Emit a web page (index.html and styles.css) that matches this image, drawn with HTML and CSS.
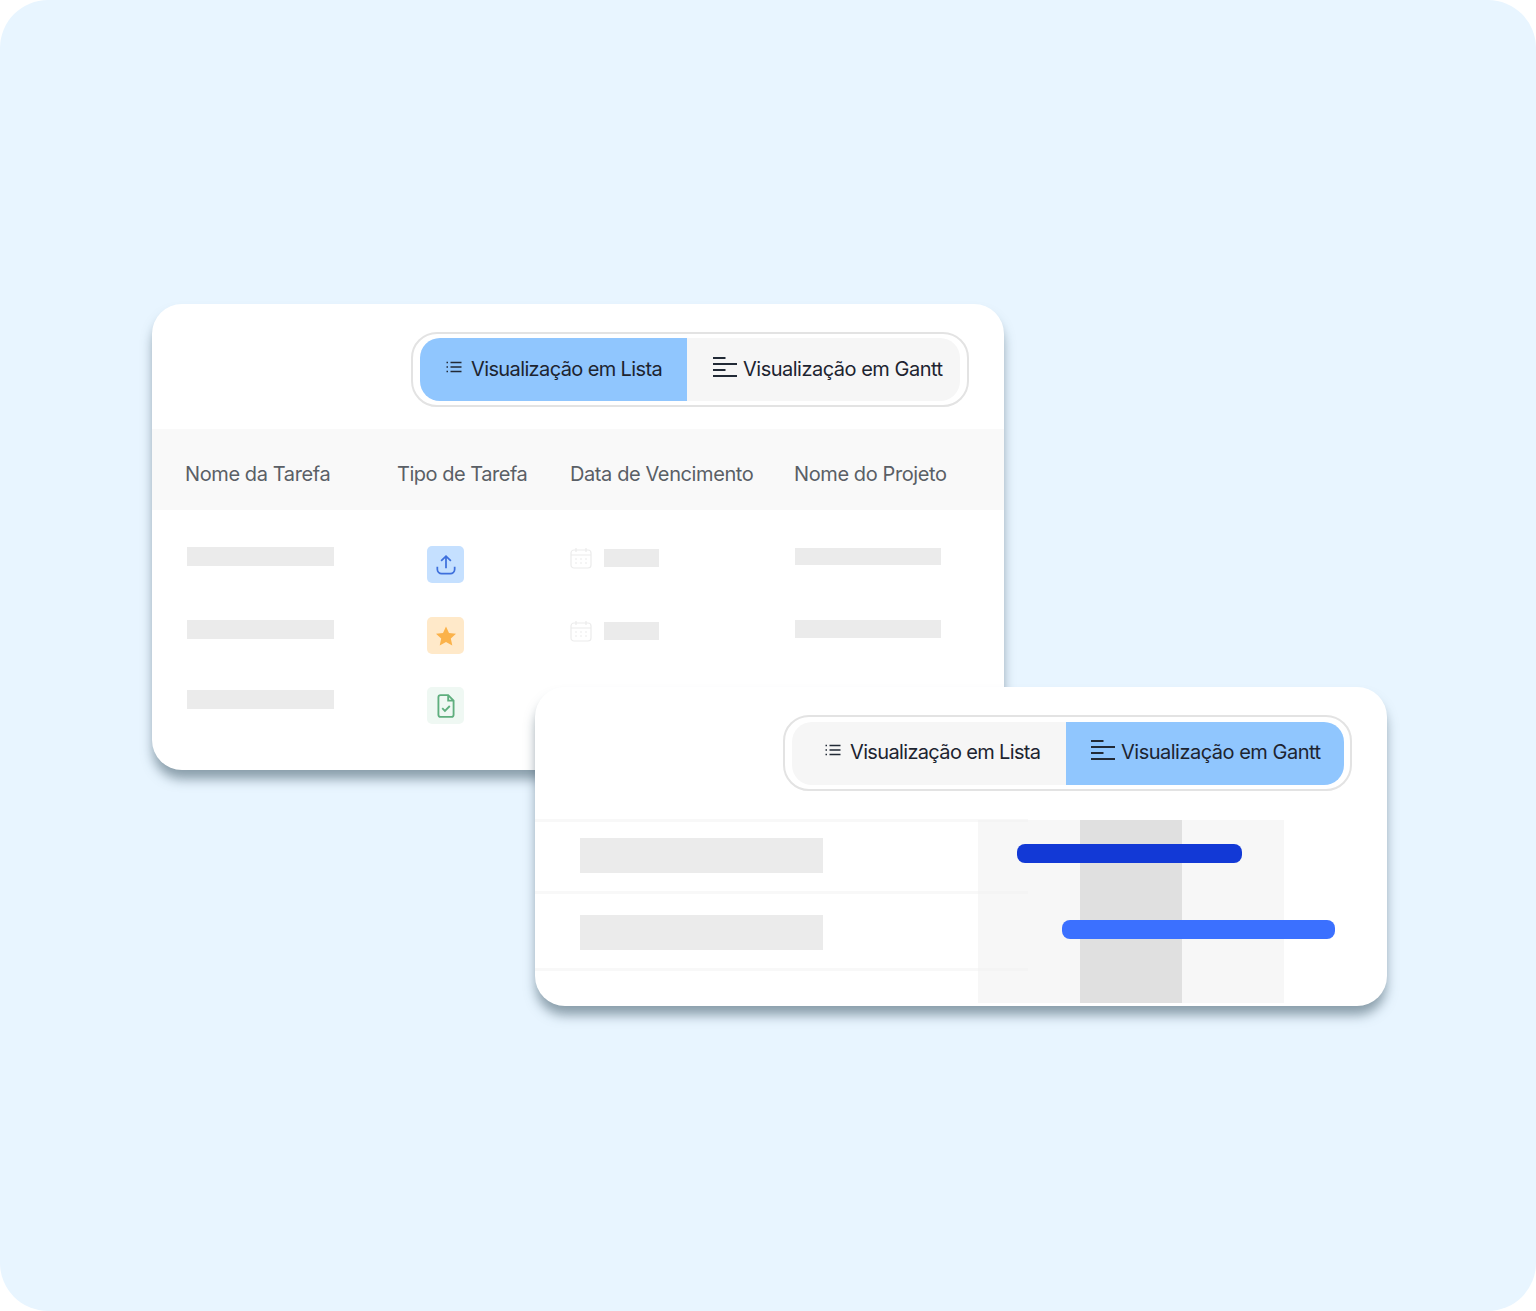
FILE: index.html
```html
<!DOCTYPE html>
<html>
<head>
    <title>Visualização em Lista e Gantt</title>
    <meta charset="UTF-8">
    <link rel="stylesheet" href="styles.css">
</head>
<body>
    <div class="scene">
        <!-- list card -->
        <div class="card card-list">
            <div class="toggle-row">
                <div class="toggle">
                    <div class="tab tab-active tab-a">
                        <svg class="icon-list" viewBox="0 0 16 12"><path d="M4.500 1.500H15.500M4.500 6H15.500M4.500 10.500H15.500M.5 1.500H2M.5 6H2M.5 10.500H2"/></svg>
                        <span>Visualização em Lista</span>
                    </div>
                    <div class="tab tab-b">
                        <svg class="icon-gantt" viewBox="0 0 24 20"><path d="M0 1H12.500M0 7H24M0 13H12.500M0 19H24"/></svg>
                        <span>Visualização em Gantt</span>
                    </div>
                </div>
            </div>
            <div class="table-head">
                <div class="th th-name">Nome da Tarefa</div>
                <div class="th th-type">Tipo de Tarefa</div>
                <div class="th th-date">Data de Vencimento</div>
                <div class="th th-project">Nome do Projeto</div>
            </div>
            <div class="table-body">
                <div class="row row-1">
                    <div class="bar bar-name"></div>
                    <div class="type type-upload">
                        <svg viewBox="0 0 24 24"><path d="M12 15V4M7.500 8.200 12 3.800l4.500 4.400M4 13.500V16a4 4 0 0 0 4 4h8a4 4 0 0 0 4-4v-2.500"/></svg>
                    </div>
                    <div class="date-cell">
                        <svg class="icon-cal" viewBox="0 0 22 22"><rect x="1" y="3" width="20" height="18" rx="3"/><path d="M1 8H21M6 1V5M16 1V5M5 12H7M10 12H12M15 12H17M5 16H7M10 16H12M15 16H17"/></svg>
                        <div class="bar bar-date"></div>
                    </div>
                    <div class="bar bar-project"></div>
                </div>
                <div class="row row-2">
                    <div class="bar bar-name"></div>
                    <div class="type type-star">
                        <svg viewBox="0 0 24 24"><path class="star" d="M12 2.500l3 6.500 7 .8-5.200 4.700 1.500 7L12 17.900l-6.300 3.600 1.500-7L2 9.800l7-.8z"/></svg>
                    </div>
                    <div class="date-cell">
                        <svg class="icon-cal" viewBox="0 0 22 22"><rect x="1" y="3" width="20" height="18" rx="3"/><path d="M1 8H21M6 1V5M16 1V5M5 12H7M10 12H12M15 12H17M5 16H7M10 16H12M15 16H17"/></svg>
                        <div class="bar bar-date"></div>
                    </div>
                    <div class="bar bar-project"></div>
                </div>
                <div class="row row-3">
                    <div class="bar bar-name"></div>
                    <div class="type type-doc">
                        <svg viewBox="0 0 24 24"><path d="M5 4a2 2 0 0 1 2-2h7l5 5v13a2 2 0 0 1-2 2H7a2 2 0 0 1-2-2zM14 2v5h5M8.500 14l2.500 2.500 4.500-4.500"/></svg>
                    </div>
                </div>
            </div>
        </div>

        <!-- gantt card -->
        <div class="card card-gantt">
            <div class="toggle-row">
                <div class="toggle">
                    <div class="tab tab-c">
                        <svg class="icon-list" viewBox="0 0 16 12"><path d="M4.500 1.500H15.500M4.500 6H15.500M4.500 10.500H15.500M.5 1.500H2M.5 6H2M.5 10.500H2"/></svg>
                        <span>Visualização em Lista</span>
                    </div>
                    <div class="tab tab-active tab-d">
                        <svg class="icon-gantt" viewBox="0 0 24 20"><path d="M0 1H12.500M0 7H24M0 13H12.500M0 19H24"/></svg>
                        <span>Visualização em Gantt</span>
                    </div>
                </div>
            </div>
            <div class="gantt">
                <div class="gantt-row"><div class="bar bar-task"></div></div>
                <div class="gantt-row"><div class="bar bar-task"></div></div>
                <div class="gantt-cols">
                    <div class="col"></div>
                    <div class="col col-mid"></div>
                    <div class="col"></div>
                </div>
                <div class="pill pill-dark"></div>
                <div class="pill pill-light"></div>
            </div>
        </div>
    </div>
</body>
</html>
```

FILE: styles.css
```css
* { box-sizing: border-box; }
html, body { margin: 0; padding: 0; background: #fff; }
body {
    font-family: Inter, "Liberation Sans", sans-serif;
    color: #1d2430;
}
.scene {
    position: relative;
    width: 1536px;
    height: 1311px;
    background: #e8f5ff;
    border-radius: 48px;
    overflow: hidden;
}

/* cards sit on a free canvas */
.card {
    position: absolute;
    width: 852px;
    background: #fff;
    border-radius: 30px;
    box-shadow: 0 10px 12px -1px rgba(60, 85, 100, 0.55);
}
.card-list { left: 152px; top: 304px; height: 466px; }
.card-gantt { left: 535px; top: 687px; height: 319px; }

/* toggle */
.toggle-row {
    display: flex;
    justify-content: flex-end;
    padding-top: 28px;
}
.card-list .toggle-row { padding-right: 35px; height: 125px; }
.card-gantt .toggle-row { padding-right: 35px; height: 132px; }
.toggle {
    display: flex;
    border: 2px solid #e3e3e3;
    border-radius: 26px;
    background: #fff;
}
.card-list .toggle { width: 558px; height: 75px; padding: 4px 7px 4px 7px; }
.card-gantt .toggle { width: 569px; height: 76px; padding: 5px 6px 4px 7px; }
.tab {
    display: flex;
    align-items: center;
    font-size: 20px;
    background: #f6f6f6;
    white-space: nowrap;
}
.tab-active { background: #90c6fe; }
.tab-a { width: 267px; padding: 0 0 1px 26px; letter-spacing: -0.62px; border-radius: 20px 0 0 20px; }
.tab-b { flex: 1; padding: 0 0 1px 26px; letter-spacing: -0.5px; border-radius: 0 20px 20px 0; }
.tab-c { width: 274px; padding: 0 0 3px 33px; letter-spacing: -0.65px; border-radius: 20px 0 0 20px; }
.tab-d { flex: 1; padding: 0 0 3px 25px; letter-spacing: -0.5px; border-radius: 0 20px 20px 0; }
.icon-list { width: 16px; height: 12px; margin-right: 9px; margin-top: -5px; flex: none; }
.icon-gantt { width: 24px; height: 20px; margin-right: 6px; margin-top: -4px; flex: none; }
.icon-list path, .icon-gantt path { fill: none; stroke: #222a36; stroke-width: 1.5; }
.icon-gantt path { stroke-width: 2; }

/* table */
.table-head {
    display: flex;
    align-items: center;
    height: 81px;
    padding-top: 8px;
    background: #f9f9f9;
    font-size: 20px;
    letter-spacing: -0.4px;
    color: #5a5f66;
}
.th-name { width: 245px; padding-left: 33px; }
.th-type { width: 173px; letter-spacing: -0.48px; }
.th-date { width: 224px; }
.table-body { padding-top: 36px; }
.row {
    display: flex;
    align-items: flex-start;
    height: 71px;
}
.row-2 { height: 70px; }
.bar { background: #ebebeb; }
.bar-name { width: 147px; height: 19px; margin: 1px 93px 0 35px; }
.row-2 .bar-name { margin-top: 3px; }
.row-3 .bar-name { margin-top: 3px; }
.type {
    display: flex;
    align-items: center;
    justify-content: center;
    width: 37px;
    height: 37px;
    margin-right: 106px;
    border-radius: 5px;
}
.type svg { width: 24px; height: 24px; }
.type-upload { background: #c5e0ff; }
.type-upload svg { width: 26px; height: 26px; }
.type-upload path { fill: none; stroke: #3d6fdc; stroke-width: 1.6; }
.type-star { background: #ffe9c9; }
.star { fill: #fbb24a; }
.type-doc { background: #eff8f3; }
.type-doc svg { width: 26px; height: 26px; }
.type-doc path { fill: none; stroke: #5fae7e; stroke-width: 1.7; }
.date-cell {
    display: flex;
    align-items: center;
    width: 224px;
    margin-top: 1px;
}
.row-2 .date-cell { margin-top: 3px; }
.icon-cal { width: 22px; height: 22px; margin-right: 12px; }
.icon-cal rect, .icon-cal path { fill: none; stroke: #ececec; stroke-width: 1.2; }
.bar-date { width: 55px; height: 18px; }
.bar-project { width: 146px; height: 17px; margin: 2px 0 0 1px; }
.row-2 .bar-project { height: 18px; margin-top: 3px; }

/* gantt */
.gantt { position: relative; height: 187px; }
.gantt-row {
    display: flex;
    align-items: center;
    width: 493px;
    height: 72px;
    padding: 0 0 2px 45px;
    border-top: 3px solid #f8f8f8;
}
.gantt-row + .gantt-row {
    height: 80px;
    padding: 2px 0 0 45px;
    border-bottom: 3px solid #f8f8f8;
}
.bar-task { width: 243px; height: 35px; }
.gantt-cols {
    position: absolute;
    left: 443px;
    top: 1px;
    display: flex;
    height: 183px;
}
.col { width: 102px; background: rgba(240, 240, 240, 0.55); }
.col-mid { background: #e0e0e0; }
.pill { position: absolute; height: 19px; border-radius: 8px; }
.pill-dark { left: 482px; top: 25px; width: 225px; background: #1239d6; }
.pill-light { left: 527px; top: 101px; width: 273px; background: #3b70ff; }
```
